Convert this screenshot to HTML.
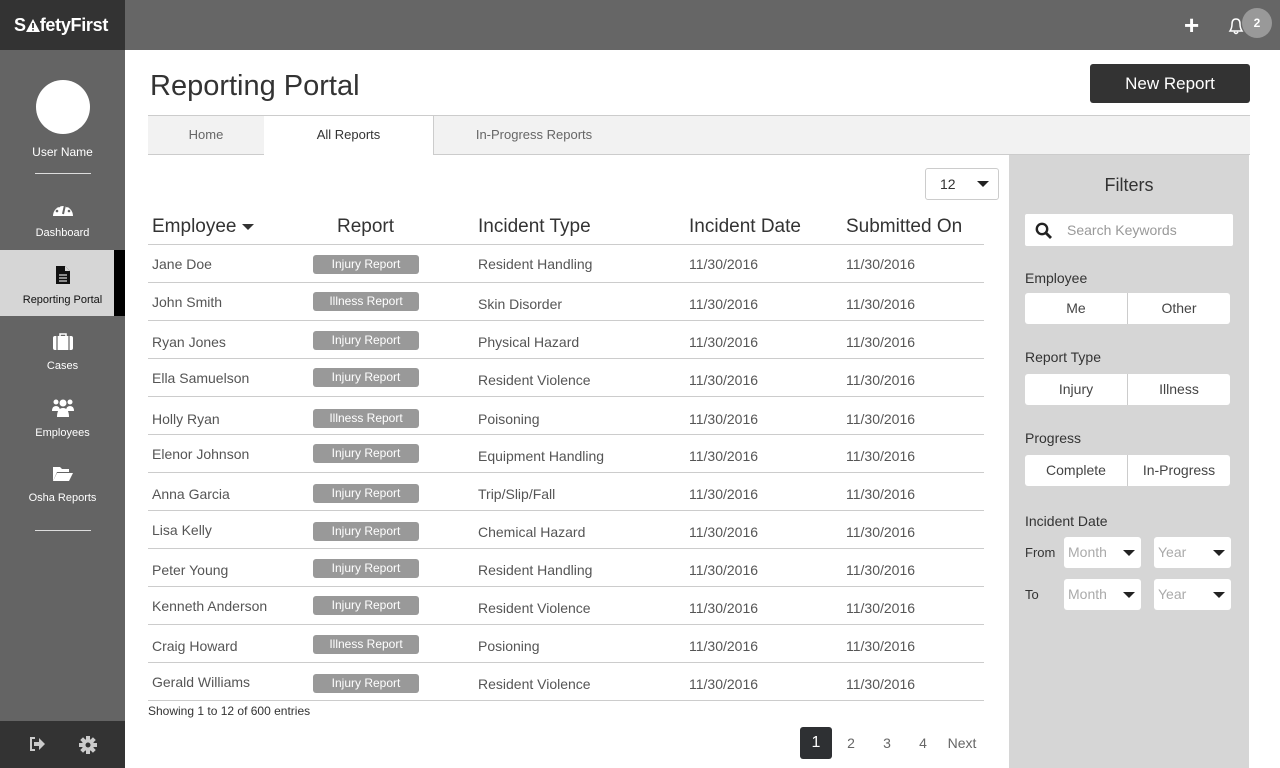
<!DOCTYPE html>
<html><head><meta charset="utf-8"><style>
*{margin:0;padding:0;box-sizing:border-box}
body{width:1280px;height:768px;overflow:hidden;font-family:"Liberation Sans",sans-serif;background:#fff;position:relative}
.a{position:absolute}
.side{left:0;top:0;width:125px;height:768px;background:#646464}
.logo{left:0;top:0;width:125px;height:50px;background:#333;color:#fff;font-size:18px;line-height:50px;padding-left:14px;font-weight:bold;letter-spacing:-0.3px}
.top{left:125px;top:0;width:1155px;height:50px;background:#666}
.nav{left:0;width:125px;text-align:center;color:#fff;font-size:11px}
.nav svg{display:block;margin:0 auto 9px}
.row{position:absolute;left:148px;width:836px;height:38px;border-bottom:1px solid #ccc;font-size:14px;color:#555}
.row span{position:absolute;top:0;line-height:38px}
.b{position:absolute;left:165px;top:10px;width:106px;height:19px;background:#999;border-radius:3px;color:#fff;font-size:12px;text-align:center;line-height:19px}
.h{position:absolute;top:216px;font-size:19px;color:#333}
.lbl{position:absolute;left:1025px;font-size:14px;color:#333}
.seg{position:absolute;left:1025px;width:205px;height:31px;background:#fff;border-radius:3px;display:flex;font-size:14px;color:#444}
.seg div{flex:1;text-align:center;line-height:31px}
.seg div+div{border-left:1px solid #ccc}
.sel{position:absolute;width:77px;height:31px;background:#fff;border-radius:3px;font-size:14px;color:#aaa;line-height:31px;padding-left:4px}
.sel:after{content:"";position:absolute;right:6px;top:13px;border:6px solid transparent;border-top:6px solid #222;border-bottom:0}
.pg{position:absolute;top:727px;height:32px;line-height:32px;font-size:14px;color:#666;text-align:center}
</style></head><body>
<div class="a side"></div>
<div class="a logo">S<svg width="14" height="13" viewBox="0 0 14 13" style="vertical-align:-1px"><path d="M7 0 L14 13 H0 Z" fill="#fff"/><path d="M7 4 V9 M7 10.2 V11.6" stroke="#333" stroke-width="1.8"/></svg>fetyFirst</div>
<div class="a top"></div>
<div class="a" style="left:1184px;top:15px;color:#fff;font-size:26px;font-weight:bold;line-height:20px">+</div>
<svg class="a" style="left:1226px;top:16px" width="20" height="20" viewBox="0 0 20 20"><path d="M4 15 Q6 12 6 8 Q6 3 10 3 Q14 3 14 8 Q14 12 16 15 Z M8 16 Q10 19 12 16" fill="none" stroke="#fff" stroke-width="1.5"/></svg>
<div class="a" style="left:1242px;top:8px;width:30px;height:30px;border-radius:50%;background:#999;color:#fff;font-size:12px;font-weight:bold;text-align:center;line-height:30px">2</div>

<div class="a" style="left:36px;top:80px;width:54px;height:54px;border-radius:50%;background:#fff"></div>
<div class="a nav" style="top:145px;font-size:12px">User Name</div>
<div class="a" style="left:35px;top:173px;width:56px;height:1px;background:#ddd"></div>
<div class="a nav" style="top:200px"><svg width="22" height="18" viewBox="0 0 22 18"><path d="M1 16 A10 10 0 1 1 21 16 Z" fill="#fff"/><circle cx="5" cy="11" r="1.3" fill="#646464"/><circle cx="7" cy="6" r="1.3" fill="#646464"/><circle cx="15" cy="6" r="1.3" fill="#646464"/><circle cx="17" cy="11" r="1.3" fill="#646464"/><path d="M11 14 L13 5" stroke="#646464" stroke-width="2"/></svg>Dashboard</div>
<div class="a" style="left:0;top:250px;width:114px;height:66px;background:#d6d6d6"></div>
<div class="a" style="left:114px;top:250px;width:11px;height:66px;background:#000"></div>
<div class="a nav" style="top:265px;color:#111;width:125px"><svg width="16" height="20" viewBox="0 0 16 20"><path d="M1 1 H10 L15 6 V19 H1 Z" fill="#111"/><path d="M10 1 V6 H15" fill="#d6d6d6"/><path d="M4 10 H12 M4 13 H12 M4 16 H12" stroke="#d6d6d6" stroke-width="1.2"/></svg>Reporting Portal</div>
<div class="a nav" style="top:333px"><svg width="22" height="18" viewBox="0 0 22 18"><path d="M8 3 V1 H14 V3" fill="none" stroke="#fff" stroke-width="1.5"/><rect x="1" y="3" width="20" height="14" rx="2" fill="#fff"/><path d="M5 3 V17 M17 3 V17" stroke="#646464" stroke-width="1.2"/></svg>Cases</div>
<div class="a nav" style="top:398px"><svg width="24" height="20" viewBox="0 0 24 20"><circle cx="5" cy="4" r="2.5" fill="#fff"/><circle cx="19" cy="4" r="2.5" fill="#fff"/><circle cx="12" cy="5" r="3.5" fill="#fff"/><path d="M1 13 Q1 8 5 8 Q9 8 9 13Z M15 13 Q15 8 19 8 Q23 8 23 13Z M6 19 Q6 10 12 10 Q18 10 18 19Z" fill="#fff"/></svg>Employees</div>
<div class="a nav" style="top:465px"><svg width="22" height="18" viewBox="0 0 22 18"><path d="M1 16 V2 H8 L10 4 H17 V7 H5 Z" fill="#fff"/><path d="M5 8 H21 L17 16 H1 Z" fill="#fff"/></svg>Osha Reports</div>
<div class="a" style="left:35px;top:530px;width:56px;height:1px;background:#ddd"></div>
<div class="a" style="left:0;top:721px;width:125px;height:47px;background:#333"></div>
<svg class="a" style="left:28px;top:736px" width="18" height="16" viewBox="0 0 18 16"><path d="M7 2 H3 V14 H7" fill="none" stroke="#ccc" stroke-width="2"/><path d="M6 6 H11 V2 L17 8 L11 14 V10 H6 Z" fill="#ccc"/></svg>
<svg class="a" style="left:79px;top:736px" width="18" height="18" viewBox="0 0 18 18"><g fill="#ccc"><circle cx="9" cy="9" r="6"/><rect x="7" y="0" width="4" height="18"/><rect x="0" y="7" width="18" height="4"/><rect x="7" y="0" width="4" height="18" transform="rotate(45 9 9)"/><rect x="7" y="0" width="4" height="18" transform="rotate(-45 9 9)"/></g><circle cx="9" cy="9" r="2.5" fill="#333"/></svg>

<div class="a" style="left:150px;top:70px;font-size:29px;color:#333">Reporting Portal</div>
<div class="a" style="left:1090px;top:64px;width:160px;height:39px;background:#333;border-radius:3px;color:#fff;font-size:17px;text-align:center;line-height:40px">New Report</div>
<div class="a" style="left:148px;top:115px;width:1102px;height:40px;background:#f2f2f2;border-top:1px solid #ccc;border-bottom:1px solid #ccc"></div>
<div class="a" style="left:148px;top:115px;width:117px;height:40px;border-right:1px solid #ccc;border-bottom:1px solid #ccc;text-align:center;line-height:39px;font-size:13px;color:#666">Home</div>
<div class="a" style="left:264px;top:115px;width:170px;height:40px;background:#fff;border-top:1px solid #ccc;border-right:1px solid #ccc;text-align:center;line-height:38px;font-size:13px;color:#333">All Reports</div>
<div class="a" style="left:434px;top:115px;width:200px;height:40px;text-align:center;line-height:39px;font-size:13px;color:#666">In-Progress Reports</div>

<div class="a" style="left:925px;top:168px;width:74px;height:32px;border:1px solid #ccc;border-radius:3px;font-size:14px;color:#333;line-height:30px;padding-left:14px">12<span style="position:absolute;right:9px;top:12px;border:6px solid transparent;border-top:6px solid #222;border-bottom:0"></span></div>

<div class="h" style="left:152px">Employee <span style="display:inline-block;border:6px solid transparent;border-top:6px solid #333;border-bottom:0;vertical-align:middle"></span></div>
<div class="h" style="left:337px">Report</div>
<div class="h" style="left:478px">Incident Type</div>
<div class="h" style="left:689px">Incident Date</div>
<div class="h" style="left:846px">Submitted On</div>
<div class="a" style="left:148px;top:244px;width:836px;height:1px;background:#ccc"></div>

<div class="row" style="top:245px"><span style="left:4px">Jane Doe</span><div class="b">Injury Report</div><span style="left:330px">Resident Handling</span><span style="left:541px">11/30/2016</span><span style="left:698px">11/30/2016</span></div>
<div class="row" style="top:283px"><span style="left:4px">John Smith</span><div class="b" style="top:9px">Illness Report</div><span style="left:330px;top:2px">Skin Disorder</span><span style="left:541px;top:2px">11/30/2016</span><span style="left:698px;top:2px">11/30/2016</span></div>
<div class="row" style="top:321px"><span style="left:4px;top:2px">Ryan Jones</span><div class="b">Injury Report</div><span style="left:330px;top:2px">Physical Hazard</span><span style="left:541px;top:2px">11/30/2016</span><span style="left:698px;top:2px">11/30/2016</span></div>
<div class="row" style="top:359px"><span style="left:4px">Ella Samuelson</span><div class="b" style="top:9px">Injury Report</div><span style="left:330px;top:2px">Resident Violence</span><span style="left:541px;top:2px">11/30/2016</span><span style="left:698px;top:2px">11/30/2016</span></div>
<div class="row" style="top:397px"><span style="left:4px;top:3px">Holly Ryan</span><div class="b" style="top:12px">Illness Report</div><span style="left:330px;top:3px">Poisoning</span><span style="left:541px;top:3px">11/30/2016</span><span style="left:698px;top:3px">11/30/2016</span></div>
<div class="row" style="top:435px"><span style="left:4px;top:0px">Elenor Johnson</span><div class="b" style="top:9px">Injury Report</div><span style="left:330px;top:2px">Equipment Handling</span><span style="left:541px;top:2px">11/30/2016</span><span style="left:698px;top:2px">11/30/2016</span></div>
<div class="row" style="top:473px"><span style="left:4px;top:2px">Anna Garcia</span><div class="b" style="top:11px">Injury Report</div><span style="left:330px;top:2px">Trip/Slip/Fall</span><span style="left:541px;top:2px">11/30/2016</span><span style="left:698px;top:2px">11/30/2016</span></div>
<div class="row" style="top:511px"><span style="left:4px;top:0px">Lisa Kelly</span><div class="b" style="top:11px">Injury Report</div><span style="left:330px;top:2px">Chemical Hazard</span><span style="left:541px;top:2px">11/30/2016</span><span style="left:698px;top:2px">11/30/2016</span></div>
<div class="row" style="top:549px"><span style="left:4px;top:2px">Peter Young</span><div class="b" style="top:10px">Injury Report</div><span style="left:330px;top:2px">Resident Handling</span><span style="left:541px;top:2px">11/30/2016</span><span style="left:698px;top:2px">11/30/2016</span></div>
<div class="row" style="top:587px"><span style="left:4px;top:0px">Kenneth Anderson</span><div class="b" style="top:9px">Injury Report</div><span style="left:330px;top:2px">Resident Violence</span><span style="left:541px;top:2px">11/30/2016</span><span style="left:698px;top:2px">11/30/2016</span></div>
<div class="row" style="top:625px"><span style="left:4px;top:2px">Craig Howard</span><div class="b" style="top:10px">Illness Report</div><span style="left:330px;top:2px">Posioning</span><span style="left:541px;top:2px">11/30/2016</span><span style="left:698px;top:2px">11/30/2016</span></div>
<div class="row" style="top:663px"><span style="left:4px;top:0px">Gerald Williams</span><div class="b" style="top:11px">Injury Report</div><span style="left:330px;top:2px">Resident Violence</span><span style="left:541px;top:2px">11/30/2016</span><span style="left:698px;top:2px">11/30/2016</span></div>
<div class="a" style="left:148px;top:704px;font-size:12px;color:#333">Showing 1 to 12 of 600 entries</div>

<div class="pg" style="left:800px;width:32px;background:#2e3033;color:#fff;border-radius:3px;font-size:16px">1</div>
<div class="pg" style="left:840px;width:22px">2</div>
<div class="pg" style="left:876px;width:22px">3</div>
<div class="pg" style="left:912px;width:22px">4</div>
<div class="pg" style="left:944px;width:36px">Next</div>

<div class="a" style="left:1009px;top:155px;width:240px;height:613px;background:#d6d6d6"></div>
<div class="a" style="left:1009px;top:175px;width:240px;text-align:center;font-size:18px;color:#333">Filters</div>
<div class="a" style="left:1025px;top:214px;width:208px;height:32px;background:#fff;border-radius:2px;font-size:14px;color:#999;line-height:32px;padding-left:42px">Search Keywords
<svg style="position:absolute;left:10px;top:8px" width="18" height="18" viewBox="0 0 18 18"><circle cx="7" cy="7" r="5.2" fill="none" stroke="#222" stroke-width="2.4"/><path d="M11 11 L16 16" stroke="#222" stroke-width="2.8"/></svg></div>
<div class="lbl" style="top:270px">Employee</div>
<div class="seg" style="top:293px"><div>Me</div><div>Other</div></div>
<div class="lbl" style="top:349px">Report Type</div>
<div class="seg" style="top:374px"><div>Injury</div><div>Illness</div></div>
<div class="lbl" style="top:430px">Progress</div>
<div class="seg" style="top:455px"><div>Complete</div><div>In-Progress</div></div>
<div class="lbl" style="top:513px">Incident Date</div>
<div class="lbl" style="top:545px;font-size:13px">From</div>
<div class="sel" style="left:1064px;top:537px">Month</div>
<div class="sel" style="left:1154px;top:537px">Year</div>
<div class="lbl" style="top:587px;font-size:13px">To</div>
<div class="sel" style="left:1064px;top:579px">Month</div>
<div class="sel" style="left:1154px;top:579px">Year</div>
</body></html>
